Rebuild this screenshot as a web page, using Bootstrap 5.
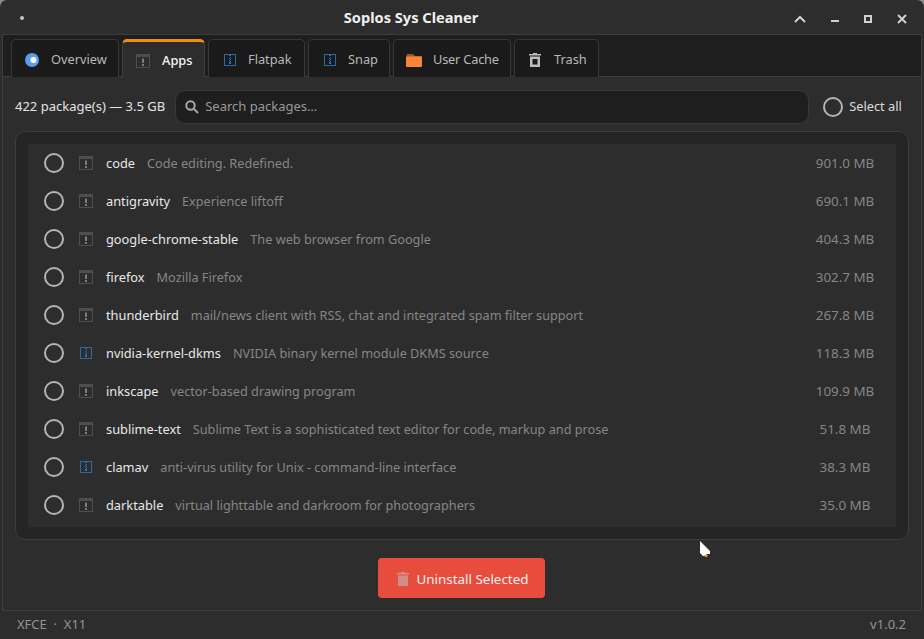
<!DOCTYPE html>
<html lang="en">

<head>
    <meta charset="UTF-8" />
    <meta name="viewport" content="width=device-width, initial-scale=1.0" />
    <title>Soplos Sys Cleaner</title>
    <link href="https://cdn.jsdelivr.net/npm/bootstrap@5.3.0/dist/css/bootstrap.min.css" rel="stylesheet" />
    <style>
        html, body { height: 100%; }

        body {
            background-color: #8a8a8a;
            font-family: "Noto Sans", "Open Sans", sans-serif;
            font-size: 13px;
            overflow: hidden;
        }

        .app-window {
            height: 639px;
            background-color: #2d2d2d;
            border-radius: 7px 7px 0 0;
            color: #e6e6e6;
            padding-top: 1px;
        }

        .title-bar {
            height: 33px;
            padding: 0 17px 0 20px;
        }

        .title-text {
            font-size: 14.6px;
            font-weight: 700;
            color: #f0f0f0;
            text-align: center;
            flex-grow: 1;
            padding-left: 4px;
        }

        .title-dot {
            width: 4px;
            height: 4px;
            border-radius: 50%;
            background-color: #c4c4c4;
        }

        .win-btns {
            gap: 25px;
            padding-top: 2px;
        }

        .main-frame {
            height: 577px;
            margin: 0 2px;
            border: 1px solid #3d3d3d;
        }

        .tab-strip {
            height: 42px;
            background-color: #1e1e1e;
            border-bottom: 1px solid #3d3d3d;
            padding: 4px 0 0 8px;
            gap: 3px;
            flex-wrap: nowrap;
        }

        .tab-strip .tab-item {
            height: 38px;
            margin-bottom: -1px;
            background-color: #1a1a1a;
            border: 1px solid #383838;
            border-bottom: 0;
            border-radius: 5px 5px 0 0;
            color: #b8b8b8;
            font-size: 12.8px;
            padding: 2px 0 0 13px;
            gap: 12px;
        }

        .tab-strip .tab-item.active {
            background-color: #2d2d2d;
            border-color: #3d3d3d;
            border-top: 3px solid #f28c12;
            color: #f4f4f4;
            font-weight: 500;
        }

        .tab-overview { width: 108px; }
        .tab-apps { width: 83px; }
        .tab-flatpak { width: 97px; }
        .tab-snap { width: 82px; }
        .tab-trash { width: 85px; }

        .tab-strip .tab-flatpak, .tab-strip .tab-snap { padding-left: 15px; }

        .tab-strip .tab-cache {
            width: 118px;
            padding-left: 12px;
            gap: 11px;
            letter-spacing: -0.2px;
        }

        .bin-grey { color: #bdbdbd; }

        .tool-row {
            height: 54px;
            padding: 6px 10px 0 12px;
            gap: 10px;
        }

        .count-text {
            color: #e4e4e4;
            font-size: 13px;
            white-space: nowrap;
        }

        .search-box {
            width: 634px;
            height: 34px;
            flex-shrink: 0;
            background-color: #1e1e1e;
            border: 1px solid #383838;
            border-radius: 10px;
            padding: 0 9px;
            gap: 6px;
            color: #9a9a9a;
            font-size: 13px;
        }

        .select-all {
            margin-left: 4px;
            gap: 6px;
            color: #dcdcdc;
            font-size: 12.8px;
            white-space: nowrap;
        }

        .round-check {
            width: 20px;
            height: 20px;
            border: 2px solid #b4b4b4;
            border-radius: 50%;
            flex-shrink: 0;
        }

        .pkg-panel {
            margin: 0 12px;
            height: 409px;
            padding: 12px 12px;
            background-color: #252525;
            border: 1px solid #3d3d3d;
            border-radius: 10px;
        }

        .pkg-list {
            border-radius: 0;
            background-color: #2d2d2d;
            padding: 0 0 3px;
        }

        .pkg-list .pkg-row {
            height: 38px;
            background-color: #2d2d2d;
            border: 0;
            padding: 0 0 0 16px;
            display: flex;
            align-items: center;
            color: #e8e8e8;
            font-size: 12.8px;
        }

        .pkg-name {
            margin-left: 13px;
            padding-top: 2px;
        }

        .pkg-desc {
            margin-left: 12px;
            padding-top: 2px;
            color: #868686;
            font-size: 12.7px;
            flex-grow: 1;
        }

        .pkg-size {
            width: 82px;
            margin-right: 10px;
            text-align: center;
            color: #868686;
            font-size: 13.4px;
        }

        .pkg-icon { margin-left: 15px; }

        .action-row {
            height: 70px;
            padding: 6px 2px 0 0;
        }

        .btn-uninstall {
            width: 167px;
            height: 40px;
            padding: 2px 0 0 2px;
            background-color: #e74c3c;
            border: 0;
            border-radius: 4px;
            color: #f8f0ee;
            font-size: 13.4px;
            gap: 7px;
        }

        .btn-uninstall:hover { background-color: #e74c3c; color: #f8f0ee; }

        .status-bar {
            height: 27px;
            padding: 0 18px 0 17px;
            color: #949494;
            font-size: 13px;
        }

        .pointer-mark {
            position: absolute;
            left: 699px;
            top: 541px;
        }
    </style>
</head>

<body>
    <svg width="0" height="0" class="position-absolute">
        <symbol id="icoApp" viewBox="0 0 14 14">
            <rect x="0.5" y="0.5" width="13" height="13" fill="none" stroke="#4e4e4e" />
            <rect x="0" y="0" width="14" height="3" fill="#4e4e4e" />
            <rect x="6" y="4.500" width="2" height="4.500" fill="#7c7c7c" />
            <rect x="6" y="10" width="2" height="2" fill="#7c7c7c" />
        </symbol>
        <symbol id="icoPak" viewBox="0 0 12 12">
            <rect x="0.5" y="0.5" width="11" height="11" fill="none" stroke="#2a68a8" />
            <path d="M5 1h2v1H5zM6 3h1v1H6zM5 4h1v1H5zM6 5h1v1H6zM5 6h1v1H5zM6 7h1v1H6zM5 8h2v2H5z" fill="#2f74b8" />
        </symbol>
        <symbol id="icoBin" viewBox="0 0 14 14">
            <path d="M5 0h4v1h4v1.500H1V1h4zM2 3.500h10V14H2zM4.500 6v5.500h5V6z" fill="currentColor" fill-rule="evenodd" />
        </symbol>
    </svg>

    <div class="app-window d-flex flex-column">
        <div class="title-bar d-flex align-items-center justify-content-between">
            <span class="title-dot"></span>
            <span class="title-text">Soplos Sys Cleaner</span>
            <div class="win-btns d-flex align-items-center">
                <svg width="12" height="8" viewBox="0 0 12 8"><path d="M1 7l5-5 5 5" fill="none" stroke="#d0d0d0" stroke-width="2" /></svg>
                <svg width="8" height="8" viewBox="0 0 8 8"><rect y="5" width="8" height="2" fill="#d0d0d0" /></svg>
                <svg width="8" height="8" viewBox="0 0 8 8"><rect x="1" y="1" width="6" height="6" fill="none" stroke="#d0d0d0" stroke-width="2" /></svg>
                <svg width="10" height="10" viewBox="0 0 10 10"><path d="M1 1l8 8M9 1l-8 8" stroke="#d0d0d0" stroke-width="2" /></svg>
            </div>
        </div>

        <div class="main-frame d-flex flex-column">
            <ul class="nav tab-strip">
                <li class="nav-item">
                    <a class="tab-item tab-overview d-flex align-items-center text-decoration-none" href="#">
                        <svg width="14" height="14" viewBox="0 0 14 14"><circle cx="7" cy="7" r="7" fill="#5b9ded" /><circle cx="8.500" cy="7" r="3" fill="#fff" /></svg>
                        Overview
                    </a>
                </li>
                <li class="nav-item">
                    <a class="tab-item tab-apps active d-flex align-items-center text-decoration-none" href="#">
                        <svg width="14" height="14"><use href="#icoApp" /></svg>
                        Apps
                    </a>
                </li>
                <li class="nav-item">
                    <a class="tab-item tab-flatpak d-flex align-items-center text-decoration-none" href="#">
                        <svg width="12" height="12"><use href="#icoPak" /></svg>
                        Flatpak
                    </a>
                </li>
                <li class="nav-item">
                    <a class="tab-item tab-snap d-flex align-items-center text-decoration-none" href="#">
                        <svg width="12" height="12"><use href="#icoPak" /></svg>
                        Snap
                    </a>
                </li>
                <li class="nav-item">
                    <a class="tab-item tab-cache d-flex align-items-center text-decoration-none" href="#">
                        <svg width="16" height="14" viewBox="0 0 16 14"><path d="M1 1h6l2 2h7v2H0z" fill="#95582f" /><rect y="3.500" width="16" height="10.500" rx="1" fill="#fb8438" /></svg>
                        User Cache
                    </a>
                </li>
                <li class="nav-item">
                    <a class="tab-item tab-trash d-flex align-items-center text-decoration-none" href="#">
                        <svg width="14" height="14" class="bin-grey"><use href="#icoBin" /></svg>
                        Trash
                    </a>
                </li>
            </ul>

            <div class="tool-row d-flex align-items-center">
                <span class="count-text">422 package(s) — 3.5 GB</span>
                <div class="search-box d-flex align-items-center">
                    <svg width="14" height="14" viewBox="0 0 14 14"><circle cx="5.500" cy="5.500" r="4.200" fill="none" stroke="#a8a8a8" stroke-width="2" /><path d="M9 9l4 4" stroke="#a8a8a8" stroke-width="2" /></svg>
                    Search packages…
                </div>
                <div class="select-all d-flex align-items-center">
                    <span class="round-check"></span>
                    Select all
                </div>
            </div>

            <div class="pkg-panel">
                <ul class="list-group pkg-list" id="pkgList"></ul>
            </div>

            <div class="action-row d-flex align-items-center justify-content-center">
                <button class="btn btn-uninstall d-flex align-items-center justify-content-center" type="button">
                    <svg width="14" height="14" viewBox="0 0 14 14"><path d="M5 0h4v1h4v1.500H1V1h4zM2 3.500h10V14H2z" fill="#cf8f88" /></svg>
                    Uninstall Selected
                </button>
            </div>
        </div>

        <div class="status-bar d-flex align-items-center justify-content-between">
            <span>XFCE &nbsp;·&nbsp; X11</span>
            <span>v1.0.2</span>
        </div>
    </div>

    <svg class="pointer-mark" width="13" height="18" viewBox="0 0 13 18">
        <path d="M1 0l10 10v3H8l-2 2H4L1 12z" fill="#fff" />
        <path d="M5 14h4l-1 2H6z" fill="#f0a000" />
    </svg>

    <script>
        const packages = [
            ["code", "Code editing. Redefined.", "901.0 MB", 0],
            ["antigravity", "Experience liftoff", "690.1 MB", 0],
            ["google-chrome-stable", "The web browser from Google", "404.3 MB", 0],
            ["firefox", "Mozilla Firefox", "302.7 MB", 0],
            ["thunderbird", "mail/news client with RSS, chat and integrated spam filter support", "267.8 MB", 0],
            ["nvidia-kernel-dkms", "NVIDIA binary kernel module DKMS source", "118.3 MB", 1],
            ["inkscape", "vector-based drawing program", "109.9 MB", 0],
            ["sublime-text", "Sublime Text is a sophisticated text editor for code, markup and prose", "51.8 MB", 0],
            ["clamav", "anti-virus utility for Unix - command-line interface", "38.3 MB", 1],
            ["darktable", "virtual lighttable and darkroom for photographers", "35.0 MB", 0]
        ];

        // one row per package, blue icon for the deb-from-repo ones
        document.getElementById("pkgList").innerHTML = packages.map(p => `
            <li class="list-group-item pkg-row">
                <span class="round-check"></span>
                ${p[3]
                    ? '<svg class="pkg-icon" width="14" height="14" viewBox="-1 -1 14 14"><use href="#icoPak" width="12" height="12" /></svg>'
                    : '<svg class="pkg-icon" width="14" height="14"><use href="#icoApp" /></svg>'}
                <span class="pkg-name">${p[0]}</span>
                <span class="pkg-desc">${p[1]}</span>
                <span class="pkg-size">${p[2]}</span>
            </li>`).join("");
    </script>
    <script src="https://cdn.jsdelivr.net/npm/bootstrap@5.3.0/dist/js/bootstrap.bundle.min.js"></script>
</body>

</html>
